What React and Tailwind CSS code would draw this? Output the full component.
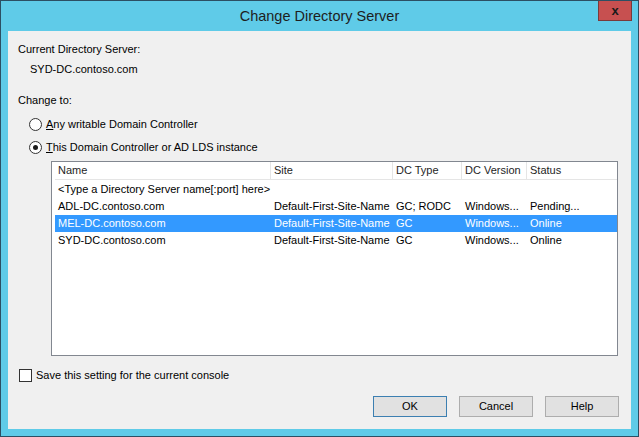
import React from "react";

const font = { fontFamily: '"Liberation Sans", Arial, sans-serif' };

function Radio({ checked }) {
  return (
    <span className="w-[13px] h-[13px] rounded-full border border-[#333333] bg-white flex items-center justify-center shrink-0">
      {checked && <span className="w-[5px] h-[5px] rounded-full bg-[#1a1a1a]" />}
    </span>
  );
}

const cols = [
  { key: "name", w: "w-[216px]", label: "Name" },
  { key: "site", w: "w-[122px]", label: "Site" },
  { key: "type", w: "w-[69px]", label: "DC Type" },
  { key: "ver", w: "w-[65px]", label: "DC Version" },
  { key: "status", w: "w-[90px]", label: "Status" },
];

const rows = [
  { name: "ADL-DC.contoso.com", site: "Default-First-Site-Name", type: "GC; RODC", ver: "Windows...", status: "Pending..." },
  { name: "MEL-DC.contoso.com", site: "Default-First-Site-Name", type: "GC", ver: "Windows...", status: "Online", sel: true },
  { name: "SYD-DC.contoso.com", site: "Default-First-Site-Name", type: "GC", ver: "Windows...", status: "Online" },
];

export default function App() {
  return (
    <div
      className="w-[639px] h-[437px] border border-[#2c4f63] bg-[#5fcbe8] flex flex-col text-[11px] text-[#000000] overflow-hidden"
      style={font}
    >
      <div className="relative h-[30px] flex items-center justify-center shrink-0">
        <span className="text-[14.5px] text-[#1e1e1e] leading-none pt-[1px]">Change Directory Server</span>
        <div className="absolute right-[6px] top-[-1px] w-[34px] h-[21px] bg-[#c75050] border border-[#7a3a3a] border-t-0 flex items-center justify-center">
          <span className="text-[13px] font-bold text-[#1a1a1a] leading-none">x</span>
        </div>
      </div>
      <div className="mx-[7px] mb-[7px] flex-1 bg-[#f0f0f0] flex flex-col">
        <div className="mt-[10px] pl-[10px] h-[16px] leading-[16px]">Current Directory Server:</div>
        <div className="mt-[4px] pl-[22px] h-[16px] leading-[16px]">SYD-DC.contoso.com</div>
        <div className="mt-[15px] pl-[10px] h-[16px] leading-[16px]">Change to:</div>
        <div className="mt-[8px] pl-[21px] h-[16px] flex items-center gap-[4px]">
          <Radio />
          <span className="leading-[16px]"><span className="underline">A</span>ny writable Domain Controller</span>
        </div>
        <div className="mt-[7px] pl-[21px] h-[16px] flex items-center gap-[4px]">
          <Radio checked />
          <span className="leading-[16px]"><span className="underline">T</span>his Domain Controller or AD LDS instance</span>
        </div>
        <div className="mt-[6px] ml-[43px] mr-[13px] h-[195px] border border-[#828790] bg-white flex flex-col pl-[3px]">
          <div className="flex h-[18px] border-b border-[#e5e5e5] w-[562px]">
            {cols.map((c, i) => (
              <div
                key={c.key}
                className={`${c.w} shrink-0 h-full flex items-center pl-[3px] text-[#1e1e1e] whitespace-nowrap ${i < cols.length - 1 ? "border-r border-[#e5e5e5]" : ""}`}
              >
                {c.label}
              </div>
            ))}
          </div>
          <div className="h-[17px] flex items-center pl-[3px] mt-[1px] whitespace-nowrap">&lt;Type a Directory Server name[:port] here&gt;</div>
          {rows.map((r) => (
            <div
              key={r.name}
              className={`flex h-[17px] w-[562px] items-center ${r.sel ? "bg-[#3399ff] text-white" : ""}`}
            >
              {cols.map((c) => (
                <div key={c.key} className={`${c.w} shrink-0 pl-[3px] whitespace-nowrap overflow-hidden`}>
                  {r[c.key]}
                </div>
              ))}
            </div>
          ))}
        </div>
        <div className="mt-[11px] pl-[11px] h-[16px] flex items-center gap-[4px]">
          <span className="w-[13px] h-[13px] border border-[#333333] bg-white shrink-0" />
          <span className="leading-[16px]">Save this setting for the current console</span>
        </div>
        <div className="mt-[13px] pr-[12px] flex justify-end gap-[12px]">
          <div className="w-[74px] h-[21px] bg-[#e1e1e1] border border-[#3c7fb1] flex items-center justify-center">OK</div>
          <div className="w-[74px] h-[21px] bg-[#e1e1e1] border border-[#adadad] flex items-center justify-center">Cancel</div>
          <div className="w-[74px] h-[21px] bg-[#e1e1e1] border border-[#adadad] flex items-center justify-center">Help</div>
        </div>
      </div>
    </div>
  );
}
